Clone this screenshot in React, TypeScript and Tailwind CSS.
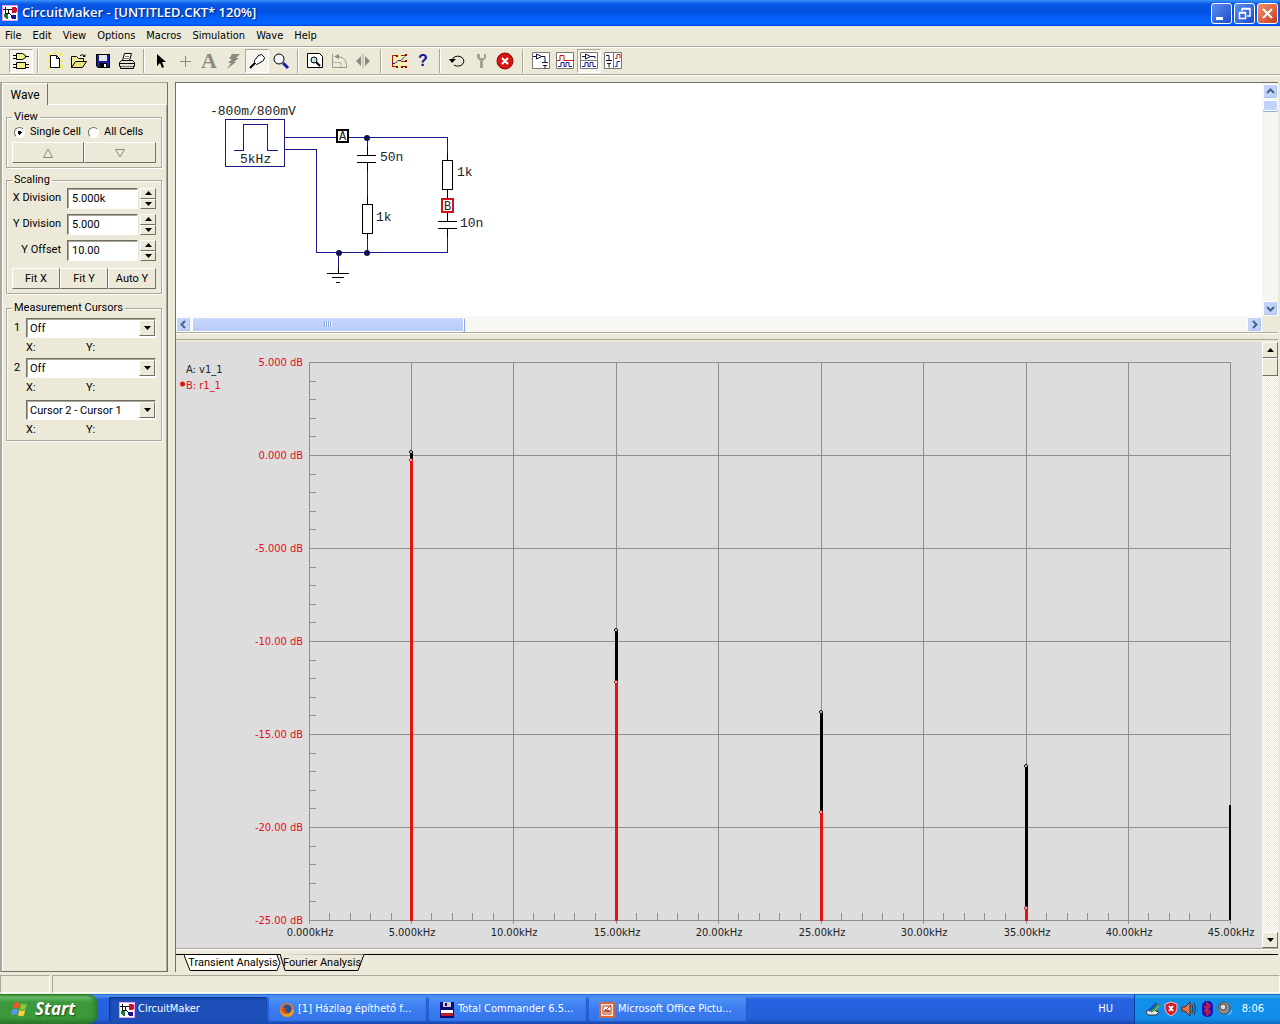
import React from 'react'
import clsx from 'clsx'

const tahoma = "font-['DejaVu_Sans_Condensed','Noto_Sans',sans-serif]"
const msSans = "font-['Roboto','Liberation_Sans',sans-serif]"
const raised = 'border border-white border-r-[#716f64] border-b-[#716f64]'
const sunken = 'border border-[#aca899] border-r-white border-b-white'
const field = 'border border-[#716f64] border-r-white border-b-white bg-white shadow-[inset_1px_1px_0_#aca899]'

const menus = ['File', 'Edit', 'View', 'Options', 'Macros', 'Simulation', 'Wave', 'Help']

function AppLogo() {
  return (
    <svg className="w-4 h-4 shrink-0" viewBox="0 0 16 16" shapeRendering="crispEdges" aria-hidden="true">
      <path d="M0 0h16v16H0z" fill="#f0a0e0" />
      <path d="M1 1h14v14H1z" fill="#fff" />
      <path d="M1 4.500h9M3.500 2v7M6.500 4v5M3 8.500h4" stroke="#111" fill="none" />
      <path d="M10 2h3l2 1v4l-2 1h-3z" fill="#d01030" />
      <path d="M2 9h4v5H4l-2-2z" fill="#1c7a3c" />
      <path d="M10 10h3l1 1v2l-1 1h-3l-1-1v-2z" fill="#14148c" />
      <path d="M7 8l3 3" stroke="#111" />
    </svg>
  )
}

const icons: Record<string, React.ReactNode> = {
  gates: (
    <>
      <path d="M5.500 2.500h6l3 2v2l-3 2h-6zM5.500 11.500h9v6h-9z" fill="#f4f08a" stroke="#000" />
      <path d="M2 4.500h3M2 7.500h3M15 5.500h3M2 13.500h3M2 16.500h3M15 13.500h3M15 16.500h3" stroke="#000" />
    </>
  ),
  new: (
    <>
      <path d="M3 3l3 3M2 10h3M3 17l3-2M14 5l3-3M16 10h2M15 14l3 3M10 1v2" stroke="#f2ee3c" strokeWidth="2" />
      <path d="M5.500 4.500h6l3 3v9h-9zM11.500 4.500v3h3" fill="#fff" stroke="#000" />
    </>
  ),
  open: (
    <>
      <path d="M2.500 16.500v-11h5l2 2h5v3h-7z" fill="#f5efa0" stroke="#000" />
      <path d="M2.500 16.500l4-6h11l-4 6z" fill="#ece27a" stroke="#000" />
      <path d="M11 4.500q3-2 5 1m0-2v2h-2" fill="none" stroke="#000" />
    </>
  ),
  save: (
    <>
      <path d="M3 3h14v14H5l-2-2z" fill="#000" />
      <path d="M4 4h12v12H5l-1-1z" fill="#1c1c9c" />
      <path d="M6 4h8v6H6z" fill="#e4e4ee" />
      <path d="M7 12h7v4H7z" fill="#000" />
      <path d="M11 13h2v3h-2z" fill="#fff" />
    </>
  ),
  print: (
    <>
      <path d="M5.500 9.500l2-7h7l-2 7z" fill="#fff" stroke="#000" />
      <path d="M8 5.500h4M7 7.500h5" stroke="#777" />
      <path d="M2.500 11.500l2-2h11l2 2v4h-15z" fill="#e4e1d6" stroke="#000" />
      <path d="M2.500 12.500h15M3.500 15.500v2h13v-2" fill="#d8d4c8" stroke="#000" />
    </>
  ),
  arrow: <path d="M6 3v12l3-3 2 5 2-1-2-5h4z" fill="#000" />,
  plus: <path d="M10.500 5v11M5 10.500h11" stroke="#8c8a80" />,
  bolt: <path d="M9 3h8l-4 4h3l-5 4h2l-9 7 4-6H5l4-4H6z" fill="#8c8a80" />,
  probe: (
    <>
      <path d="M3 17l5-5" stroke="#000" strokeWidth="2" />
      <path d="M7.500 9.500l4-5 3-1 3 3-1 3-5 3-2 1-2-2z" fill="#fff" stroke="#000" />
    </>
  ),
  zoom: (
    <>
      <circle cx="8" cy="8" r="5" fill="#f4f4ff" stroke="#000" />
      <path d="M12 12l5 5" stroke="#1c1c9c" strokeWidth="3" />
    </>
  ),
  fit: (
    <>
      <path d="M2.500 2.500h12l3 3v11h-15z" fill="#fff" stroke="#000" />
      <circle cx="9" cy="9" r="3" fill="#bfe4e8" stroke="#000" />
      <path d="M11 11l4 4" stroke="#000" strokeWidth="2" />
    </>
  ),
  rotate: (
    <>
      <path d="M3.500 3v13.500H17.500v-3q-1-8-10-8" fill="none" stroke="#9a978b" />
      <path d="M10 3v5L5 5.500z" fill="#8c8a80" />
      <path d="M3 11.500h9v5" fill="none" stroke="#9a978b" strokeDasharray="2 1" />
    </>
  ),
  mirror: (
    <>
      <path d="M8 5v10l-5-5zM12 5v10l5-5z" fill="#8c8a80" />
      <path d="M10 3v14" stroke="#aca899" />
    </>
  ),
  wires: (
    <>
      <path d="M4 3h13v14H4z" fill="#f6f0b0" />
      <path d="M3.500 16V4.500H7M3 15.500h5M12 4.500h6M12 15.500h5M12 10.500h5" fill="none" stroke="#b01010" />
      <path d="M3 12.500h3l3-3h3l4-4" fill="none" stroke="#1c1c9c" />
      <path d="M7 4h2v2H7zM16 3h2v2h-2zM12 15h2v2h-2zM16 15h2v2h-2zM7 15h2v2H7zM16 9h2v2h-2z" fill="#7a0a0a" />
    </>
  ),
  reset: (
    <>
      <path d="M5 9a6 5 0 1 1 2 5" fill="none" stroke="#000" />
      <path d="M2 8h7l-4 4z" fill="#000" />
    </>
  ),
  wrench: <path d="M6 3v4l3 3v7h3v-7l3-3V3h-2v4h-4V3z" fill="#a5a293" />,
  stop: (
    <>
      <circle cx="10" cy="10" r="8" fill="#d81414" stroke="#8c0808" />
      <path d="M7 7l6 6M13 7l-6 6" stroke="#fff" strokeWidth="2" />
    </>
  ),
  schematic: (
    <>
      <path d="M1.500 1.500h17v16h-17z" fill="#fff" stroke="#777" />
      <path d="M2 5.500h3M5.500 3v5l5-2.500zM10 5.500h4v6M11 11.500h6M12 14.500h4M14 14.500v3" fill="none" stroke="#14143c" />
    </>
  ),
  waves: (
    <>
      <path d="M1.500 1.500h17v16h-17z" fill="#fff" stroke="#777" />
      <path d="M2 9.500h3v-5h4v5h10" fill="none" stroke="#d01414" />
      <path d="M3 15.500h3v-4h3v4h2v-4h3v4h3" fill="none" stroke="#1c1c9c" />
    </>
  ),
  splitRows: (
    <>
      <path d="M1.500 1.500h17v16h-17zM1.500 9.500h17" fill="#fff" stroke="#777" />
      <path d="M3 5.500h3M6.500 3v5l5-2.500zM11 5.500h5v2" fill="none" stroke="#14143c" />
      <path d="M3 15.500h3v-4h3v4h2v-4h3v4h3" fill="none" stroke="#1c1c9c" />
    </>
  ),
  splitCols: (
    <>
      <path d="M1.500 1.500h17v16h-17zM10.500 1.500v16" fill="#fff" stroke="#777" />
      <path d="M3 4.500h3v5M3 9.500h6M4 12.500h4M6 12.500v4" fill="none" stroke="#14143c" />
      <path d="M12 7.500h2v-4h3v4" fill="none" stroke="#d01414" />
      <path d="M12 15.500h2v-5h3" fill="none" stroke="#1c1c9c" />
    </>
  ),
}

function Tool({ name, label, pressed }: { name: string; label: string; pressed?: boolean }) {
  return (
    <button
      aria-label={label}
      className={clsx('w-6 h-6 shrink-0 flex items-center justify-center', pressed && 'border border-[#aca899] border-r-white border-b-white bg-[#f6f4ec]')}
    >
      <svg className="w-5 h-5 shrink-0" viewBox="0 0 20 20">{icons[name]}</svg>
    </button>
  )
}

function Separator({ wide }: { wide?: boolean }) {
  return <span className={clsx('w-[2px] h-6 shrink-0 border-l border-[#aca899] bg-white', wide ? 'mx-[5px]' : 'mx-1')} />
}

function TitleBar() {
  const btn = 'w-[21px] h-[21px] rounded-[3px] border border-white flex items-center justify-center'
  return (
    <header className="h-[26px] shrink-0 flex items-center pl-[2px] pr-[2px] gap-1 bg-[linear-gradient(#3c93fb_0,#0a58e6_4px,#0350e0_12px,#0560fb_18px,#0466fd_24px,#003dd7_26px)]">
      <AppLogo />
      <h1 className="flex-1 text-white text-[13px] font-semibold font-['Open_Sans',sans-serif] [text-shadow:1px_1px_1px_#0a1f6b]">
        CircuitMaker - [UNTITLED.CKT* 120%]
      </h1>
      <div className="flex gap-[2px]">
        <button aria-label="Minimize" className={clsx(btn, 'bg-linear-to-br from-[#5c8ff0] to-[#1c48c8]')}>
          <svg className="w-[19px] h-[19px]" viewBox="0 0 19 19"><path d="M4 13h7v3H4z" fill="#fff" /></svg>
        </button>
        <button aria-label="Restore" className={clsx(btn, 'bg-linear-to-br from-[#5c8ff0] to-[#1c48c8]')}>
          <svg className="w-[19px] h-[19px]" viewBox="0 0 19 19">
            <path d="M7 7V5h8v7h-3M7 4.500h8M4.500 9v5.500h6V9zM4 8.500h7" fill="none" stroke="#fff" strokeWidth="1.500" />
          </svg>
        </button>
        <button aria-label="Close" className={clsx(btn, 'bg-linear-to-br from-[#f09070] to-[#c83810]')}>
          <svg className="w-[19px] h-[19px]" viewBox="0 0 19 19"><path d="M5 5l9 9M14 5l-9 9" stroke="#fff" strokeWidth="2" /></svg>
        </button>
      </div>
    </header>
  )
}

function Toolbar() {
  return (
    <div className="h-[29px] shrink-0 flex items-center pl-[9px] border-t border-b border-[#aca899] shadow-[inset_0_1px_0_#fff,0_1px_0_#fff]">
      <Tool name="gates" label="Parts browser" pressed />
      <Separator />
      <Tool name="new" label="New" />
      <Tool name="open" label="Open" />
      <Tool name="save" label="Save" />
      <Tool name="print" label="Print" />
      <Separator />
      <Tool name="arrow" label="Select" />
      <Tool name="plus" label="Wire" />
      <button className="w-6 h-6 shrink-0 text-[22px] leading-6 font-bold text-[#8c8a80] font-['Liberation_Serif',serif]">A</button>
      <Tool name="bolt" label="Delete" />
      <Tool name="probe" label="Probe" pressed />
      <Tool name="zoom" label="Zoom" />
      <Separator />
      <Tool name="fit" label="Fit" />
      <Tool name="rotate" label="Rotate" />
      <Tool name="mirror" label="Mirror" />
      <Separator wide />
      <Tool name="wires" label="Digital mode" />
      <button className="w-6 h-6 shrink-0 text-[16px] leading-6 font-bold text-[#1414a0] font-['Liberation_Sans',sans-serif]">?</button>
      <Separator />
      <Tool name="reset" label="Reset" />
      <Tool name="wrench" label="Setup" />
      <Tool name="stop" label="Stop" />
      <Separator wide />
      <Tool name="schematic" label="Schematic only" />
      <Tool name="waves" label="Waveforms only" />
      <Tool name="splitRows" label="Split horizontally" pressed />
      <Tool name="splitCols" label="Split vertically" />
    </div>
  )
}

const legend = 'px-[2px] h-3 leading-3'
const group = 'border border-[#aca899] shadow-[1px_1px_0_#fff,inset_1px_1px_0_#fff] px-[5px]'

function Triangle({ down, hollow }: { down?: boolean; hollow?: boolean }) {
  if (hollow) {
    return (
      <svg className="w-3 h-3" viewBox="0 0 12 12" aria-hidden="true">
        <path d={down ? 'M1.500 2.500h9L6 10z' : 'M1.500 10.500h9L6 2z'} fill="none" stroke="#8c8a80" />
      </svg>
    )
  }
  return (
    <svg className="w-[7px] h-1" viewBox="0 0 7 4" aria-hidden="true">
      <path d={down ? 'M0 0h7L3.500 4z' : 'M0 4h7L3.500 0z'} fill="#000" />
    </svg>
  )
}

function ScaleRow({ id, label, value }: { id: string; label: string; value: string }) {
  return (
    <div className="flex items-center h-[21px]">
      <label htmlFor={id} className="flex-1 text-right pr-[6px] pb-[2px] whitespace-nowrap">{label}</label>
      <input id={id} defaultValue={value} className={clsx(field, 'w-[71px] h-[21px] px-1 mr-[2px]')} />
      <div className="w-4 h-[21px] flex flex-col">
        <button aria-label={`${label} up`} className={clsx(raised, 'flex-1 flex items-center justify-center')}><Triangle /></button>
        <button aria-label={`${label} down`} className={clsx(raised, 'flex-1 flex items-center justify-center')}><Triangle down /></button>
      </div>
    </div>
  )
}

function CursorRow({ id, label, value }: { id: string; label: string; value: string }) {
  return (
    <div>
      <div className="flex items-center">
        <label htmlFor={id} className="w-[14px] pl-[2px]">{label}</label>
        <div className="relative flex-1">
          <select id={id} aria-label={label || 'Cursor difference'} className={clsx(field, 'appearance-none w-full h-5 pl-[3px] leading-none block')}>
            <option>{value}</option>
          </select>
          <span className={clsx(raised, 'absolute right-[1px] top-[2px] w-4 h-4 bg-[#ece9d8] flex items-center justify-center pointer-events-none')}>
            <Triangle down />
          </span>
        </div>
      </div>
      <div className="flex pl-[14px] h-5 items-center">
        <span className="w-[60px]">X:</span>
        <span>Y:</span>
      </div>
    </div>
  )
}

function WavePanel() {
  const radio =
    'appearance-none w-[11px] h-[11px] rounded-full bg-white border border-[#716f64] border-r-white border-b-white checked:bg-[radial-gradient(#000_2px,#fff_2px)]'
  return (
    <aside className={clsx(msSans, 'w-[168px] shrink-0 flex flex-col border-l-2 border-t border-[#aca899] border-r border-r-[#716f64] border-b border-b-[#716f64] text-[11px] leading-3')}>
      <div role="tablist" className="flex h-[22px] shrink-0">
        <button role="tab" aria-selected="true" className="w-[46px] border-t border-l border-white border-r border-r-[#716f64] text-[12px]">Wave</button>
        <span className="flex-1 border-b border-white" />
      </div>
      <div className="flex-1 flex flex-col pl-[3px] pr-1 pt-[6px] border-l border-white border-r border-r-[#aca899]">
        <fieldset className={clsx(group, 'pb-1')}>
          <legend className={legend}>View</legend>
          <div className="flex items-center h-[14px] pl-[2px] mt-[2px] mb-[3px]">
            <input id="single" name="cells" type="radio" defaultChecked className={radio} />
            <label htmlFor="single" className="pl-[5px] w-[63px] whitespace-nowrap">Single Cell</label>
            <input id="all" name="cells" type="radio" className={radio} />
            <label htmlFor="all" className="pl-[5px] whitespace-nowrap">All Cells</label>
          </div>
          <div className="flex h-[21px]">
            <button aria-label="Previous cell" className={clsx(raised, 'flex-1 flex items-center justify-center')}><Triangle hollow /></button>
            <button aria-label="Next cell" className={clsx(raised, 'flex-1 flex items-center justify-center')}><Triangle hollow down /></button>
          </div>
        </fieldset>
        <fieldset className={clsx(group, 'mt-[6px] pb-1')}>
          <legend className={legend}>Scaling</legend>
          <div className="flex flex-col gap-[5px] pt-[2px]">
            <ScaleRow id="xdiv" label="X Division" value="5.000k" />
            <ScaleRow id="ydiv" label="Y Division" value="5.000" />
            <ScaleRow id="yoff" label="Y Offset" value="10.00" />
          </div>
          <div className="grid grid-cols-3 h-[21px] mt-[7px]">
            <button className={raised}>Fit X</button>
            <button className={raised}>Fit Y</button>
            <button className={raised}>Auto Y</button>
          </div>
        </fieldset>
        <fieldset className={clsx(group, 'mt-2 pt-1')}>
          <legend className={legend}>Measurement Cursors</legend>
          <CursorRow id="c1" label="1" value="Off" />
          <CursorRow id="c2" label="2" value="Off" />
          <div className="pt-[2px]">
            <CursorRow id="diff" label="" value="Cursor 2 - Cursor 1" />
          </div>
        </fieldset>
      </div>
    </aside>
  )
}

function XpArrow({ dir }: { dir: 'up' | 'down' | 'left' | 'right' }) {
  const d = { up: 'M4 9l3.500-3.500L11 9', down: 'M4 6l3.500 3.500L11 6', left: 'M9 4L5.500 7.500 9 11', right: 'M6 4l3.500 3.500L6 11' }[dir]
  return (
    <button aria-label={`Scroll ${dir}`} className="w-[15px] h-[15px] shrink-0 rounded-[2px] border border-white bg-[#c1d3fb] shadow-[inset_-1px_-1px_0_#a8c0f0]">
      <svg className="w-[13px] h-[13px]" viewBox="1 1 13 13"><path d={d} fill="none" stroke="#4d6185" strokeWidth="2" /></svg>
    </button>
  )
}

function Schematic() {
  return (
    <svg className="block w-[330px] h-[233px]" viewBox="176 83 330 233" role="img" aria-label="Circuit schematic">
      <g fill="none" stroke="#1a1a8c" shapeRendering="crispEdges">
        <path d="M225.500 119.500h59v47h-59zM234 150.500h9.500v-26h24v26h10" />
        <path d="M285 137.500h162.500v16M285 149.500h31.500v103h131v-16M367.500 138v8M367.500 171v25M367.500 238v15M338.500 253v14" />
      </g>
      <g fill="none" stroke="#000" shapeRendering="crispEdges">
        <path d="M367.500 146v9M357 155.500h19M357 162.500h19M367.500 163v8M367.500 196v8M362.500 204.500h10v29h-10zM367.500 234v5" />
        <path d="M447.500 153v7M442.500 160.500h10v29h-10zM447.500 190v8M447.500 213v8M438 221.500h19M438 228.500h19M447.500 229v8" />
        <path d="M338.500 267v6M327 273.500h22M332 277.500h12M336 282.500h4" />
      </g>
      <g fill="#10104c">
        <circle cx="367" cy="138" r="3" />
        <circle cx="367" cy="253" r="3" />
        <circle cx="339" cy="253" r="3" />
      </g>
      <path d="M337 130h11v12h-11z" fill="#fff" stroke="#000" strokeWidth="2" />
      <path d="M442 199h11v13h-11z" fill="#fff" stroke="#d01020" strokeWidth="2" />
      <g className="font-['Liberation_Mono',monospace] text-[13px]" fill="#222">
        <text x="210" y="115">-800m/800mV</text>
        <text x="240" y="163">5kHz</text>
        <text x="339" y="140" className="text-[12px]">A</text>
        <text x="444" y="210" className="text-[12px]">B</text>
        <text x="380" y="161">50n</text>
        <text x="376" y="221">1k</text>
        <text x="457" y="176">1k</text>
        <text x="460" y="227">10n</text>
      </g>
    </svg>
  )
}

// vertical grid lines, one per 5 kHz
const gridX = [309, 411, 513, 616, 718, 821, 923, 1026, 1128, 1230]
const xLabels = ['0.000kHz', '5.000kHz', '10.00kHz', '15.00kHz', '20.00kHz', '25.00kHz', '30.00kHz', '35.00kHz', '40.00kHz', '45.00kHz']
const yLabels = ['5.000 dB', '0.000 dB', '-5.000 dB', '-10.00 dB', '-15.00 dB', '-20.00 dB', '-25.00 dB']
const harmonics = [
  { x: 411, a: 452, b: 460 },
  { x: 616, a: 630, b: 682 },
  { x: 821, a: 712, b: 812 },
  { x: 1026, a: 766, b: 908 },
]

function Spectrum() {
  return (
    <svg className="block w-full h-full" viewBox="176 342 1085 606" preserveAspectRatio="xMinYMin meet" role="img" aria-label="Fourier analysis">
      <g stroke="#8f8f8f" shapeRendering="crispEdges">
        {gridX.map((x) => <line key={x} x1={x + 0.5} x2={x + 0.5} y1="362" y2="924" />)}
        {yLabels.map((l, i) => <line key={l} x1="309" x2="1231" y1={362.5 + i * 93} y2={362.5 + i * 93} />)}
        {Array.from({ length: 30 }, (_, i) => {
          const y = 362.5 + Math.round(i * 18.6)
          return <line key={i} x1="309" x2="316" y1={y} y2={y} />
        })}
        {gridX.slice(0, -1).map((x) =>
          [20, 41, 61, 82].map((dx) => <line key={x + dx} x1={x + dx + 0.5} x2={x + dx + 0.5} y1="913" y2="920" />),
        )}
      </g>
      {harmonics.map(({ x, a, b }) => (
        <g key={x}>
          <rect x={x - 1} y={a} width="3" height={b - a} fill="#000" />
          <rect x={x - 1} y={b} width="3" height={921 - b} fill="#e81010" />
          <circle cx={x} cy={a} r="1.500" fill="#fff" stroke="#000" />
          <circle cx={x} cy={b} r="1.500" fill="#fff" stroke="#a01010" />
        </g>
      ))}
      <path d="M1230 805V920" stroke="#000" strokeWidth="2" />
      <g className={clsx(tahoma, 'text-[11px]')} fill="#e01020" textAnchor="end">
        {yLabels.map((l, i) => <text key={l} x="303" y={366 + i * 93}>{l}</text>)}
      </g>
      <g className={clsx(tahoma, 'text-[11px]')} fill="#222" textAnchor="middle">
        {xLabels.map((l, i) => <text key={l} x={gridX[i] + 1} y="936">{l}</text>)}
      </g>
      <g className={clsx(tahoma, 'text-[11px]')}>
        <text x="186" y="373" fill="#222">A: v1_1</text>
        <text x="186" y="389" fill="#e01020">B: r1_1</text>
        <circle cx="182.500" cy="384" r="2.500" fill="#e81010" />
      </g>
    </svg>
  )
}

const dither = 'bg-[repeating-conic-gradient(#ece9d8_0_25%,#fff_0_50%)] bg-[size:2px_2px]'

function Workspace() {
  return (
    <main className="flex-1 min-w-0 flex flex-col border-l border-t border-[#716f64] mr-[2px]">
      <section className="flex flex-col shrink-0 bg-white">
        <div className="flex">
          <div className="flex-1 min-w-0 overflow-hidden"><Schematic /></div>
          <div className="w-4 flex flex-col items-center pt-[1px] bg-[#f6f5f0]">
            <XpArrow dir="up" />
            <span className="w-[15px] h-[11px] mt-[1px] rounded-[2px] border border-white bg-[#c1d3fb] shadow-[0_1px_0_#8fa9dc]" />
            <span className="flex-1" />
            <XpArrow dir="down" />
          </div>
        </div>
        <div className="flex h-4">
          <div className="flex-1 flex items-center bg-[#f8f7f3]">
            <XpArrow dir="left" />
            <span className="w-[25%] h-[15px] ml-[1px] rounded-[2px] border border-white bg-linear-to-b from-[#c9d8fc] to-[#b7cbf8] shadow-[1px_1px_0_#8fa9dc] flex items-center justify-center gap-[1px]">
              {[0, 1, 2, 3].map((i) => <i key={i} className="w-[1px] h-[6px] bg-[#8ca6e0] shadow-[1px_0_0_#eef4fe]" />)}
            </span>
            <span className="flex-1" />
            <XpArrow dir="right" />
          </div>
          <span className="w-4 bg-[#ece9d8]" />
        </div>
      </section>
      <div className="h-[10px] shrink-0 flex flex-col justify-between pb-[2px] border-t border-[#aca899]">
        <span className="h-px bg-white" />
        <span className="h-px bg-[#aca899]" />
      </div>
      <section className="flex-1 min-h-0 flex bg-[#dddddd] border-b border-[#aca899]">
        <div className="flex-1 min-w-0 min-h-0"><Spectrum /></div>
        <div className={clsx('w-4 flex flex-col', dither)}>
          <button aria-label="Scroll up" className={clsx(raised, 'h-4 bg-[#ece9d8] flex items-center justify-center')}><Triangle /></button>
          <span className={clsx(raised, 'h-[18px] bg-[#ece9d8]')} />
          <span className="flex-1" />
          <button aria-label="Scroll down" className={clsx(raised, 'h-4 bg-[#ece9d8] flex items-center justify-center')}><Triangle down /></button>
        </div>
      </section>
      <div className="h-[5px] shrink-0 border-t border-white" />
      <div role="tablist" className={clsx(msSans, 'h-[18px] shrink-0 flex border-t border-black pl-2 text-[11px] leading-3')}>
        <button role="tab" aria-selected="false" className="relative w-[98px] h-4">
          <svg className="absolute left-0 top-0 w-[98px] h-4" viewBox="0 0 98 16" aria-hidden="true">
            <path d="M0 0l6 15.500h87l3-7.500-3-8" fill="#fff" stroke="#000" />
          </svg>
          <span className="relative whitespace-nowrap">Transient Analysis</span>
        </button>
        <button role="tab" aria-selected="true" className="relative w-[84px] h-[17px] -mt-px -ml-[2px]">
          <svg className="absolute left-0 top-0 w-[84px] h-[17px]" viewBox="0 0 84 17" aria-hidden="true">
            <path d="M0 0l5 16.500h73L84 0.500" fill="#ece9d8" stroke="#000" />
          </svg>
          <span className="relative whitespace-nowrap">Fourier Analysis</span>
        </button>
      </div>
    </main>
  )
}

function TaskButton({ icon, label, active }: { icon: React.ReactNode; label: string; active?: boolean }) {
  return (
    <button
      className={clsx(
        'w-[158px] h-[25px] rounded-[2px] flex items-center gap-[3px] pl-[10px] text-white text-[11px] whitespace-nowrap',
        active ? 'bg-[#1c4fb8] shadow-[inset_1px_1px_2px_#0b2f80]' : 'bg-linear-to-b from-[#4f93f8] via-[#3a7cf0] to-[#3374e8] shadow-[inset_-1px_-1px_1px_#2459c8]',
      )}
    >
      {icon}
      <span>{label}</span>
    </button>
  )
}

function Taskbar() {
  return (
    <footer className={clsx(tahoma, 'h-[30px] shrink-0 flex items-stretch bg-[linear-gradient(#2a66d8_0,#4a94f8_2px,#2663e0_5px,#2560dc_24px,#1a48b0_30px)]')}>
      <button className="w-[98px] flex items-center pl-[11px] gap-[6px] rounded-r-[10px] text-white text-[17px] font-bold italic font-['Open_Sans',sans-serif] [text-shadow:1px_1px_2px_#1c4a14] bg-[linear-gradient(#2f7d2c_0,#6cbd68_3px,#3c9a3c_8px,#3a983a_24px,#2a7228_30px)] shadow-[inset_-3px_0_4px_#2a7a2a]">
        <svg className="w-[18px] h-[18px] shrink-0" viewBox="0 0 18 18" aria-hidden="true">
          <path d="M3 3q3-2 6 0L7.500 8.500q-3-1.500-6 0z" fill="#f0582c" />
          <path d="M10 3.500q3 1.500 6 0L14.500 9q-3 1.500-6 0z" fill="#8cc83c" />
          <path d="M1.200 9.500q3-1.500 6 0L6 15q-3-1.500-6 0z" fill="#5c94f0" />
          <path d="M8.200 10q3 1.500 6 0L13 15.500q-3 1.500-6 0z" fill="#f8d03c" />
        </svg>
        Start
      </button>
      <nav className="flex-1 flex items-center gap-[2px] pl-[11px] pt-[1px]">
        <TaskButton active icon={<AppLogo />} label="CircuitMaker" />
        <TaskButton
          label="[1] Házilag építhető f..."
          icon={
            <svg className="w-4 h-4" viewBox="0 0 16 16" aria-hidden="true">
              <circle cx="8" cy="8" r="7" fill="#e87818" />
              <circle cx="8" cy="7" r="4.500" fill="#28509c" />
              <path d="M1 6q1 6 6 6 5 0 6-4l2-1q0 8-7 8-7-1-7-9z" fill="#f09c20" />
              <path d="M3 5l4 1-1 3 3 1-3 2-3-3z" fill="#d84c10" />
            </svg>
          }
        />
        <TaskButton
          label="Total Commander 6.5..."
          icon={
            <svg className="w-4 h-4" viewBox="0 0 16 16" shapeRendering="crispEdges" aria-hidden="true">
              <path d="M1 0h14v16H1z" fill="#0a0a78" />
              <path d="M4 0h8v5H4z" fill="#ccc" />
              <path d="M6 1h2v3H6z" fill="#0a0a50" />
              <path d="M2 8h12v6H2z" fill="#fff" />
              <path d="M2 11h12v3H2z" fill="#c01c28" />
            </svg>
          }
        />
        <TaskButton
          label="Microsoft Office Pictu..."
          icon={
            <svg className="w-4 h-4" viewBox="0 0 16 16" aria-hidden="true">
              <path d="M1 1h14v14H1z" fill="#f8e4dc" stroke="#d06848" strokeWidth="2" />
              <path d="M4 4h8v8H4z" fill="#fff" stroke="#b83c1c" />
              <path d="M5 10l2-3 2 2 1-1 1 2zM8 7l4-4" fill="#d8603c" stroke="#b83c1c" />
            </svg>
          }
        />
      </nav>
      <span className="self-center pr-[21px] text-white text-[11px]">HU</span>
      <div className="w-[146px] flex items-center pl-[10px] gap-[3px] text-white text-[11px] border-l border-[#0c3c9c] bg-[linear-gradient(#0c5ec8_0,#38b0f8_2px,#1290e8_5px,#118ee8_24px,#0c6cc0_30px)]">
        <svg className="w-4 h-4" viewBox="0 0 16 16" aria-hidden="true">
          <path d="M1 11l4-3 9 3-3 3H3z" fill="#e8e8e8" stroke="#333" />
          <path d="M4 10l8-8" stroke="#1c4cc8" strokeWidth="3" />
          <path d="M6 11l8-8" stroke="#2ca03c" strokeWidth="2" />
          <path d="M8 11l6-6" stroke="#f0c020" />
        </svg>
        <svg className="w-[14px] h-4" viewBox="0 0 14 16" aria-hidden="true">
          <path d="M7 1l6 2v5q0 4-6 7-6-3-6-7V3z" fill="#d41c28" stroke="#f0c8c8" />
          <path d="M5 5l4 5M9 5l-4 5" stroke="#fff" strokeWidth="2" />
        </svg>
        <svg className="w-4 h-4" viewBox="0 0 16 16" aria-hidden="true">
          <path d="M1 6h3l5-5v14l-5-5H1z" fill="#e87848" stroke="#5c2010" />
          <path d="M11 4q2 4 0 8M13 2q3 6 0 12" fill="none" stroke="#333" />
        </svg>
        <svg className="w-[14px] h-4" viewBox="0 0 14 16" aria-hidden="true">
          <rect x="2" y="0" width="11" height="16" rx="5" fill="#1414b8" />
          <path d="M4 5l6 6-3 3V2l3 3-6 6" fill="none" stroke="#e01c3c" strokeWidth="1.500" />
        </svg>
        <svg className="w-4 h-4" viewBox="0 0 16 16" aria-hidden="true">
          <circle cx="7" cy="7" r="6" fill="#8c8c8c" stroke="#555" />
          <circle cx="6" cy="6" r="3" fill="#ddd" stroke="#444" />
          <path d="M11 14q3-1 4-5" fill="none" stroke="#a0d0f8" />
        </svg>
        <time className="ml-auto pr-4">8:06</time>
      </div>
    </footer>
  )
}

export default function App() {
  return (
    <div className="h-screen flex flex-col bg-[#ece9d8] text-black">
      <TitleBar />
      <nav className={clsx(tahoma, 'h-5 shrink-0 flex items-center pl-[5px] gap-[11px] text-[11px]')}>
        {menus.map((m) => <button key={m}>{m}</button>)}
      </nav>
      <Toolbar />
      <div className="flex-1 min-h-0 flex gap-[7px] pt-[7px]">
        <WavePanel />
        <Workspace />
      </div>
      {/* Status bar */}
      <div className="h-[22px] shrink-0 flex gap-[2px] pt-[3px] pb-px">
        <span className={clsx(sunken, 'w-[50px]')} />
        <span className={clsx(sunken, 'flex-1')} />
      </div>
      <Taskbar />
    </div>
  )
}
